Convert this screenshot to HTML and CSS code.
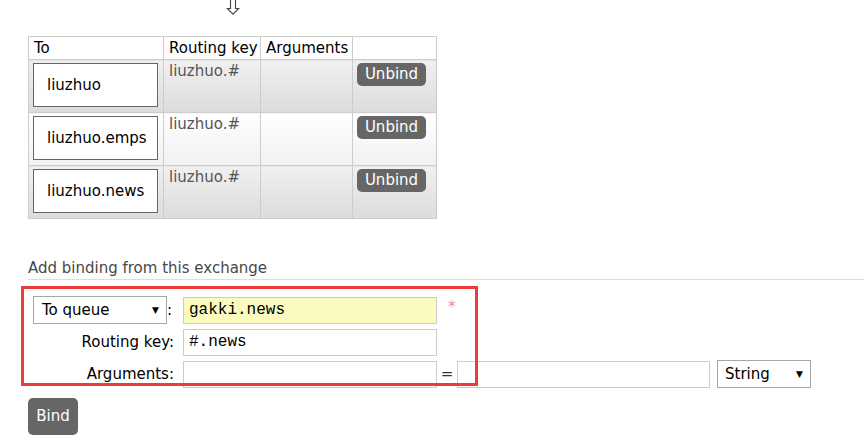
FILE: index.html
```html
<!DOCTYPE html>
<html>
<head>
<meta charset="utf-8">
<link rel="stylesheet" href="styles.css">
</head>
<body>
<div class="page">
  <div class="arrow-wrap">
    <svg class="arrow" width="14" height="15" viewBox="0 0 14 15" aria-hidden="true">
      <path d="M4.5 0 V8.5 H1.2 L7 14.2 L12.8 8.5 H9.5 V0" fill="none" stroke="#444" stroke-width="1.1"/>
    </svg>
  </div>
  <table class="bindings">
    <thead>
      <tr>
        <th class="c1">To</th>
        <th class="c2">Routing key</th>
        <th class="c3">Arguments</th>
        <th class="c4"></th>
      </tr>
    </thead>
    <tbody>
      <tr class="alt1">
        <td><span class="qbox">liuzhuo</span></td>
        <td class="rk">liuzhuo.#</td>
        <td></td>
        <td><button class="btn">Unbind</button></td>
      </tr>
      <tr class="alt2">
        <td><span class="qbox">liuzhuo.emps</span></td>
        <td class="rk">liuzhuo.#</td>
        <td></td>
        <td><button class="btn">Unbind</button></td>
      </tr>
      <tr class="alt1">
        <td><span class="qbox">liuzhuo.news</span></td>
        <td class="rk">liuzhuo.#</td>
        <td></td>
        <td><button class="btn">Unbind</button></td>
      </tr>
    </tbody>
  </table>

  <h3 class="section">Add binding from this exchange</h3>

  <div class="form">
    <div class="lbl lbl-select">
      <span class="select sel-queue">To queue<span class="tri">&#9660;</span></span>
      <span class="colon">:</span>
    </div>
    <div class="field-row">
      <span class="input mono req">gakki.news</span>
      <span class="star">*</span>
    </div>

    <div class="lbl">Routing key:</div>
    <div class="field-row">
      <span class="input mono">#.news</span>
    </div>

    <div class="lbl">Arguments:</div>
    <div class="field-row">
      <span class="input"></span>
      <span class="eq">=</span>
      <span class="input wide"></span>
      <span class="select sel-type">String<span class="tri">&#9660;</span></span>
    </div>
  </div>

  <button class="btn btn-bind">Bind</button>

  <div class="highlight"></div>
</div>
</body>
</html>
```
FILE: styles.css
```css
html, body {
  margin: 0;
  padding: 0;
  background: #fff;
}
body {
  font-family: "DejaVu Sans", Verdana, sans-serif;
  font-size: 15px;
  color: #000;
  width: 864px;
  height: 442px;
  overflow: hidden;
}
.page {
  position: relative;
  display: flow-root;
  height: 442px;
}
.arrow-wrap {
  width: 408px;
  margin-left: 28px;
  height: 36px;
  display: flex;
  justify-content: center;
  align-items: flex-start;
}
.arrow {
  display: block;
  margin-left: 2px;
}
.bindings {
  margin-left: 28px;
  border-collapse: collapse;
  border: 1px solid #ccc;
  table-layout: fixed;
  width: 409px;
}
.bindings th, .bindings td {
  border: 1px solid #ccc;
  text-align: left;
  vertical-align: top;
  font-weight: normal;
}
.bindings th {
  height: 22px;
  padding: 0 0 0 5px;
  line-height: 22px;
  font-size: 15px;
  color: #000;
}
.bindings th.c1 { width: 129px; }
.bindings th.c2 { width: 91px; }
.bindings th.c3 { width: 86px; }
.bindings th.c4 { width: 78px; }
.bindings td {
  height: 53px;
  padding: 2px 4px 0 4px;
  box-sizing: border-box;
}
.alt1 td {
  background: linear-gradient(#f0f0f0, #dcdcdc);
}
.alt2 td {
  background: linear-gradient(#ffffff, #f1f1f1);
}
.qbox {
  display: flex;
  align-items: center;
  box-sizing: border-box;
  width: 125px;
  height: 44px;
  margin-top: 1px;
  border: 1px solid #666;
  background: #fff;
  padding-left: 13px;
  font-size: 15px;
  color: #000;
}
.bindings td.rk {
  padding-left: 5px;
  padding-top: 3px;
  color: #555;
  font-size: 15px;
  line-height: 17px;
}
.btn {
  font-family: "DejaVu Sans", Verdana, sans-serif;
  background: #666;
  color: #fff;
  border: none;
  border-radius: 5px;
  font-size: 15px;
  padding: 0;
  width: 69px;
  height: 23px;
  line-height: 23px;
  margin-top: 1px;
  cursor: pointer;
}
.section {
  margin: 40px 0 0 28px;
  padding: 0 0 2px 0;
  font-weight: normal;
  font-size: 15px;
  color: #484848;
  border-bottom: 1px solid #ddd;
  line-height: 18px;
}
.form {
  display: grid;
  grid-template-columns: 141px auto;
  grid-auto-rows: 28px;
  column-gap: 9px;
  row-gap: 4px;
  align-items: center;
  margin: 16px 0 0 33px;
}
.lbl {
  text-align: right;
  font-size: 15px;
  color: #000;
}
.lbl-select {
  display: flex;
  align-items: center;
  justify-content: space-between;
}
.colon {
  padding-right: 2px;
}
.field-row {
  display: flex;
  align-items: center;
}
.select {
  display: flex;
  align-items: center;
  justify-content: space-between;
  box-sizing: border-box;
  border: 1px solid #a6a6a6;
  background: #fff;
  font-size: 15px;
  height: 28px;
  color: #000;
}
.sel-queue {
  width: 134px;
  padding: 0 7px 0 8px;
}
.sel-type {
  width: 94px;
  margin-left: 7px;
  padding: 0 7px 0 7px;
}
.tri {
  font-size: 9px;
}
.input {
  display: flex;
  align-items: center;
  box-sizing: border-box;
  width: 254px;
  height: 27px;
  border: 1px solid #ccc;
  background: #fff;
  padding-left: 5px;
  font-size: 15px;
}
.input.wide {
  width: 253px;
}
.mono {
  font-family: "Liberation Mono", "Courier New", monospace;
  font-size: 16px;
  color: #000;
}
.req {
  background: #fbfbbf;
}
.star {
  color: #f88;
  font-size: 15px;
  margin-left: 11px;
  align-self: flex-start;
  line-height: 20px;
}
.eq {
  width: 20px;
  text-align: center;
  color: #333;
}
.btn-bind {
  display: block;
  margin: 10px 0 0 28px;
  width: 50px;
  height: 37px;
  line-height: 37px;
  border-radius: 5px;
}
.highlight {
  position: absolute;
  left: 21px;
  top: 286px;
  width: 451px;
  height: 94px;
  border: 3px solid #ef3a3a;
  pointer-events: none;
}
```
